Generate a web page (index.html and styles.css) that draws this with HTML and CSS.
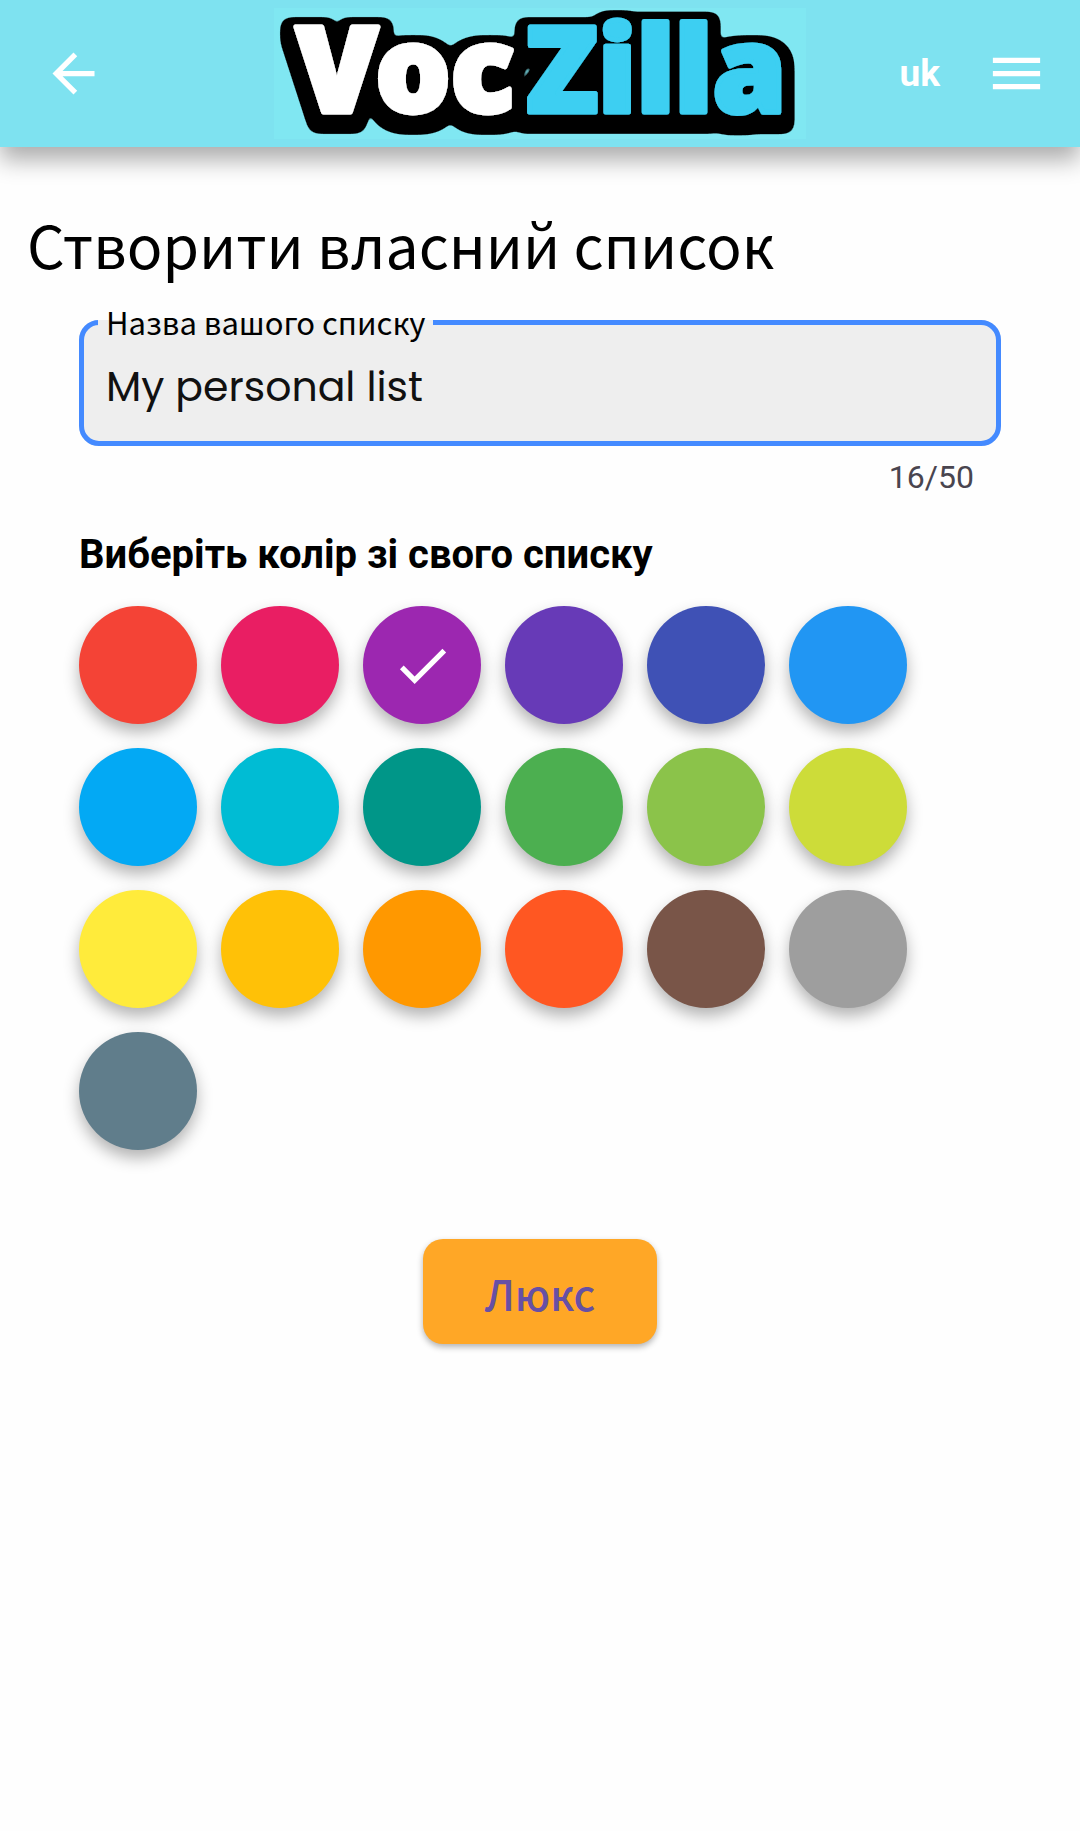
FILE: index.html
```html
<!DOCTYPE html>
<html lang="uk">
<head>
<meta charset="utf-8">
<meta name="viewport" content="width=device-width, initial-scale=1">
<title>VocZilla</title>
<link rel="stylesheet" href="styles.css">
</head>
<body>
<header class="app-bar">
  <button class="icon-button back" type="button" aria-label="Назад">
    <svg class="icon" viewBox="0 0 24 24"><path d="M20 11H7.83l5.59-5.59L12 4l-8 8 8 8 1.41-1.41L7.83 13H20v-2z"/></svg>
  </button>
  <svg class="logo" viewBox="0 0 532 131" role="img" aria-label="VocZilla">
    <defs>
      <filter id="sticker" filterUnits="userSpaceOnUse" x="-10" y="-10" width="552" height="151">
        <feMorphology in="SourceAlpha" operator="dilate" radius="8"/>
        <feGaussianBlur stdDeviation="4"/>
        <feColorMatrix values="0 0 0 0 0  0 0 0 0 0  0 0 0 0 0  0 0 0 20 -1.62"/>
        <feOffset dy="6" result="outline"/>
        <feMerge><feMergeNode in="outline"/><feMergeNode in="SourceGraphic"/></feMerge>
      </filter>
    </defs>
    <g filter="url(#sticker)">
      <text class="logo-voc" x="22" y="104">Voc</text>
      <text class="logo-zilla" x="252" y="104">Zilla</text>
    </g>
  </svg>
  <div class="app-actions">
    <button class="language" type="button">uk</button>
    <button class="icon-button" type="button" aria-label="Меню">
      <svg class="icon" viewBox="0 0 24 24"><path d="M3 18h18v-2H3v2zm0-5h18v-2H3v2zm0-7v2h18V6H3z"/></svg>
    </button>
  </div>
</header>
<main class="page">
  <h1 class="title">Створити власний список</h1>
  <form class="form">
    <fieldset class="field">
      <legend class="field-legend"><label for="list-name">Назва вашого списку</label></legend>
      <input class="field-input" id="list-name" type="text" maxlength="50" value="My personal list">
    </fieldset>
    <div class="counter">16/50</div>
    <h2 class="subtitle" id="color-title">Виберіть колір зі свого списку</h2>
    <div class="swatches" role="radiogroup" aria-labelledby="color-title">
      <input class="swatch red" type="radio" name="color" aria-label="Червоний">
      <input class="swatch pink" type="radio" name="color" aria-label="Рожевий">
      <label class="choice"><input class="swatch purple" type="radio" name="color" aria-label="Фіолетовий" checked><svg class="icon check" viewBox="0 0 24 24"><path d="M9 16.17L4.83 12l-1.42 1.41L9 19 21 7l-1.41-1.41z"/></svg></label>
      <input class="swatch deep-purple" type="radio" name="color" aria-label="Темно-фіолетовий">
      <input class="swatch indigo" type="radio" name="color" aria-label="Індиго">
      <input class="swatch blue" type="radio" name="color" aria-label="Синій">
      <input class="swatch light-blue" type="radio" name="color" aria-label="Блакитний">
      <input class="swatch cyan" type="radio" name="color" aria-label="Ціан">
      <input class="swatch teal" type="radio" name="color" aria-label="Бірюзовий">
      <input class="swatch green" type="radio" name="color" aria-label="Зелений">
      <input class="swatch light-green" type="radio" name="color" aria-label="Світло-зелений">
      <input class="swatch lime" type="radio" name="color" aria-label="Лаймовий">
      <input class="swatch yellow" type="radio" name="color" aria-label="Жовтий">
      <input class="swatch amber" type="radio" name="color" aria-label="Бурштиновий">
      <input class="swatch orange" type="radio" name="color" aria-label="Помаранчевий">
      <input class="swatch deep-orange" type="radio" name="color" aria-label="Темно-помаранчевий">
      <input class="swatch brown" type="radio" name="color" aria-label="Коричневий">
      <input class="swatch grey" type="radio" name="color" aria-label="Сірий">
      <input class="swatch blue-grey" type="radio" name="color" aria-label="Синьо-сірий">
    </div>
    <button class="submit" type="button">Люкс</button>
  </form>
</main>
</body>
</html>
```
FILE: styles.css
```css
* { box-sizing: border-box; }

body {
  margin: 0;
  background: #fefefe;
  color: #000;
  font-family: Roboto, sans-serif;
}

button {
  border: 0;
  background: none;
  padding: 0;
  cursor: pointer;
}

.app-bar {
  display: grid;
  grid-template-columns: 1fr auto 1fr;
  align-items: center;
  padding: 8px 32px;
  background: #7ee2f0;
  box-shadow: 0 13px 22px rgba(0, 0, 0, 0.32);
}

.icon-button { display: flex; color: #fff; }

.back { padding-left: 10px; }

.icon {
  width: 63px;
  height: 63px;
  fill: currentColor;
}

.logo {
  width: 532px;
  height: 131px;
  overflow: visible;
  background: #80e7f2;
  font-family: "Noto Sans", sans-serif;
  font-size: 118px;
  font-weight: 900;
  stroke-linejoin: round;
}

.logo-voc { fill: #fff; stroke: #fff; stroke-width: 5px; }
.logo-zilla { fill: #3ccff2; stroke: #3ccff2; stroke-width: 5px; }

.app-actions {
  display: flex;
  justify-content: flex-end;
  align-items: center;
  gap: 45px;
}

.language {
  color: #fff;
  font: 700 37px/48px Roboto, sans-serif;
}

.page { padding: 53px 27px; }

.title {
  margin: 0;
  font: 400 59px/88px "Noto Sans CJK JP", sans-serif;
}

.form {
  display: flex;
  flex-direction: column;
  padding: 12px 52px;
}

.field {
  min-width: 0;
  margin: 0;
  padding: 0 14px 12px;
  border: 5px solid #448aff;
  border-radius: 20px;
  background: #eee;
}

.field-legend {
  padding: 0 8px;
  font: 400 31px/44px "Noto Sans CJK JP", sans-serif;
}

.field-input {
  display: block;
  width: 100%;
  height: 85px;
  padding: 0 8px;
  border: 0;
  outline: 0;
  background: none;
  color: #111;
  font: 400 41px/60px Poppins, Inter, sans-serif;
}

.counter {
  padding: 11px 27px 0;
  color: #49454f;
  font-size: 32px;
  line-height: 40px;
  text-align: right;
}

.subtitle {
  margin: 33px 0 26px;
  font-size: 40px;
  line-height: 50px;
}

.swatches {
  display: grid;
  grid-template-columns: repeat(auto-fill, 118px);
  gap: 24px;
}

.choice { display: grid; place-items: center; }
.choice > * { grid-area: 1 / 1; }

.check { color: #fff; z-index: 1; }

.swatch {
  appearance: none;
  width: 118px;
  height: 118px;
  margin: 0;
  border-radius: 50%;
  box-shadow: 0 8px 16px rgba(0, 0, 0, 0.3);
}

.red { background: #f44336; }
.pink { background: #e91e63; }
.purple { background: #9c27b0; }
.deep-purple { background: #673ab7; }
.indigo { background: #3f51b5; }
.blue { background: #2196f3; }
.light-blue { background: #03a9f4; }
.cyan { background: #00bcd4; }
.teal { background: #009688; }
.green { background: #4caf50; }
.light-green { background: #8bc34a; }
.lime { background: #cddc39; }
.yellow { background: #ffeb3b; }
.amber { background: #ffc107; }
.orange { background: #ff9800; }
.deep-orange { background: #ff5722; }
.brown { background: #795548; }
.grey { background: #9e9e9e; }
.blue-grey { background: #607d8b; }

.submit {
  align-self: center;
  margin-top: 89px;
  padding: 22px 62px 19px;
  border-radius: 20px;
  background: #ffa726;
  box-shadow: 0 3px 6px rgba(0, 0, 0, 0.3);
  color: #6750a4;
  font: 500 42px/64px "Noto Sans CJK JP", sans-serif;
}
```
